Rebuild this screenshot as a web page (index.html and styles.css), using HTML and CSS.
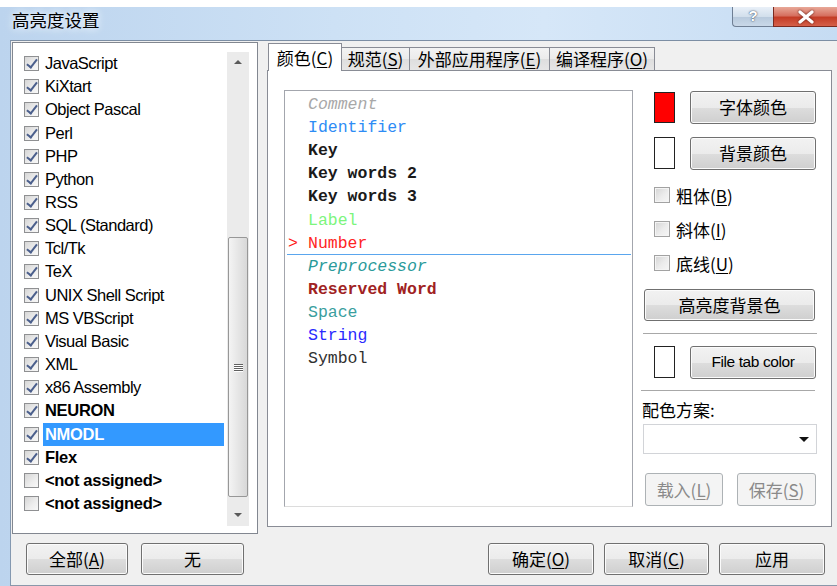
FILE: index.html
```html
<!DOCTYPE html>
<html lang="zh-CN">
<head>
<meta charset="utf-8">
<title>高亮度设置</title>
<link rel="stylesheet" href="styles.css">
</head>
<body>
<div class="window">
  <div class="titlebar">
    <div class="title">高亮度设置</div>
    <div class="caption">
      <div class="cap-help">?</div>
      <div class="cap-close">
        <svg width="18" height="14" viewBox="0 0 18 14"><path d="M3 2 L15 12 M15 2 L3 12" stroke="#fff" stroke-width="3.2" stroke-linecap="round"/></svg>
      </div>
    </div>
  </div>

  <div class="client">
    <div class="main">
      <!-- language list with check boxes -->
      <div class="langlist">
        <div class="items">
          <div class="row"><span class="cb on"></span><span class="lbl">JavaScript</span></div>
          <div class="row"><span class="cb on"></span><span class="lbl">KiXtart</span></div>
          <div class="row"><span class="cb on"></span><span class="lbl">Object Pascal</span></div>
          <div class="row"><span class="cb on"></span><span class="lbl">Perl</span></div>
          <div class="row"><span class="cb on"></span><span class="lbl">PHP</span></div>
          <div class="row"><span class="cb on"></span><span class="lbl">Python</span></div>
          <div class="row"><span class="cb on"></span><span class="lbl">RSS</span></div>
          <div class="row"><span class="cb on"></span><span class="lbl">SQL (Standard)</span></div>
          <div class="row"><span class="cb on"></span><span class="lbl">Tcl/Tk</span></div>
          <div class="row"><span class="cb on"></span><span class="lbl">TeX</span></div>
          <div class="row"><span class="cb on"></span><span class="lbl">UNIX Shell Script</span></div>
          <div class="row"><span class="cb on"></span><span class="lbl">MS VBScript</span></div>
          <div class="row"><span class="cb on"></span><span class="lbl">Visual Basic</span></div>
          <div class="row"><span class="cb on"></span><span class="lbl">XML</span></div>
          <div class="row"><span class="cb on"></span><span class="lbl">x86 Assembly</span></div>
          <div class="row"><span class="cb on"></span><span class="lbl b">NEURON</span></div>
          <div class="row"><span class="cb on"></span><span class="lbl b sel">NMODL</span></div>
          <div class="row"><span class="cb on"></span><span class="lbl b">Flex</span></div>
          <div class="row"><span class="cb"></span><span class="lbl b">&lt;not assigned&gt;</span></div>
          <div class="row"><span class="cb"></span><span class="lbl b">&lt;not assigned&gt;</span></div>
        </div>
        <div class="sb">
          <div class="sb-btn"><span class="tri-up"></span></div>
          <div class="sb-track">
            <div class="thumb"><span class="grip"></span><span class="grip"></span><span class="grip"></span><span class="grip"></span></div>
          </div>
          <div class="sb-btn sb-btn-down"><span class="tri-down"></span></div>
        </div>
      </div>

      <!-- tabbed settings -->
      <div class="tabarea">
        <div class="tabs">
          <div class="tab active t1">颜色(<u>C</u>)</div>
          <div class="tab t2">规范(<u>S</u>)</div>
          <div class="tab t3">外部应用程序(<u>E</u>)</div>
          <div class="tab t4">编译程序(<u>O</u>)</div>
        </div>
        <div class="panel">
          <div class="codelist">
            <div class="crow c-comment"><span class="mark"></span>Comment</div>
            <div class="crow c-ident"><span class="mark"></span>Identifier</div>
            <div class="crow c-key"><span class="mark"></span>Key</div>
            <div class="crow c-key"><span class="mark"></span>Key words 2</div>
            <div class="crow c-key"><span class="mark"></span>Key words 3</div>
            <div class="crow c-label"><span class="mark"></span>Label</div>
            <div class="crow c-number current"><span class="mark">&gt;</span>Number</div>
            <div class="crow c-pre"><span class="mark"></span>Preprocessor</div>
            <div class="crow c-res"><span class="mark"></span>Reserved Word</div>
            <div class="crow c-space"><span class="mark"></span>Space</div>
            <div class="crow c-string"><span class="mark"></span>String</div>
            <div class="crow c-symbol"><span class="mark"></span>Symbol</div>
          </div>

          <div class="side">
            <div class="srow r1">
              <span class="swatch red"></span>
              <div class="btn wide">字体颜色</div>
            </div>
            <div class="srow r2">
              <span class="swatch"></span>
              <div class="btn wide">背景颜色</div>
            </div>
            <div class="chk first"><span class="box"></span><span>粗体(<u>B</u>)</span></div>
            <div class="chk"><span class="box"></span><span>斜体(<u>I</u>)</span></div>
            <div class="chk"><span class="box"></span><span>底线(<u>U</u>)</span></div>
            <div class="btn hbg">高亮度背景色</div>
            <div class="sep"></div>
            <div class="srow r3">
              <span class="swatch"></span>
              <div class="btn wide latin">File tab color</div>
            </div>
            <div class="sep sep2"></div>
            <div class="scheme-label">配色方案:</div>
            <div class="select"><span class="tri-down dark"></span></div>
            <div class="loadsave">
              <div class="btn disabled load">载入(<u>L</u>)</div>
              <div class="btn disabled save">保存(<u>S</u>)</div>
            </div>
          </div>
        </div>
      </div>
    </div>

    <div class="footer">
      <div class="btn f-all">全部(<u>A</u>)</div>
      <div class="btn f-none">无</div>
      <div class="spacer"></div>
      <div class="btn f-ok">确定(<u>O</u>)</div>
      <div class="btn f-cancel">取消(<u>C</u>)</div>
      <div class="btn f-apply">应用</div>
    </div>
  </div>
</div>
</body>
</html>
```

FILE: styles.css
```css
* { box-sizing: border-box; }

html, body {
  margin: 0;
  padding: 0;
}

body {
  width: 837px;
  height: 586px;
  overflow: hidden;
  background: #fff;
  font-family: "Noto Sans CJK SC", "Liberation Sans", sans-serif;
  font-size: 17px;
  color: #000;
}

u { text-decoration: underline; text-underline-offset: 2px; }

/* ---------- window frame ---------- */
.window {
  margin-top: 7px;
  height: 579px;
  display: flex;
  flex-direction: column;
  background: linear-gradient(90deg, #bcd4ee 0%, #cde1f5 40%, #d6e7f8 65%, #c6dcf3 100%);
}

.titlebar {
  height: 33px;
  display: flex;
  align-items: flex-start;
}

.title {
  margin: 3px 0 0 12px;
  font-size: 17.5px;
  line-height: 20px;
  text-shadow: 0 0 6px #eef5fd, 0 0 10px #eef5fd;
}

.caption {
  margin-left: auto;
  display: flex;
  height: 20px;
}

.cap-help {
  width: 41px;
  height: 20px;
  border: 1px solid #6f7f94;
  border-top: none;
  border-right: none;
  border-radius: 0 0 0 4px;
  background: linear-gradient(#e9f0f8 0%, #d2dfec 50%, #b7c9dc 51%, #c9d8e8 100%);
  color: #fff;
  font-family: "Liberation Sans", sans-serif;
  font-weight: bold;
  font-size: 15px;
  line-height: 18px;
  text-align: center;
  text-shadow: 0 0 1px #4a5a70, 0 0 2px #4a5a70;
}

.cap-close {
  width: 64px;
  height: 20px;
  border-bottom: 1px solid #7a2a20;
  border-left: 1px solid #7a2a20;
  background: linear-gradient(#e8a898 0%, #d67060 45%, #c43c26 55%, #d5604a 100%);
  display: flex;
  align-items: center;
  justify-content: center;
}

.cap-close svg { filter: drop-shadow(0 0 1px #5a1a10); }

.client {
  flex: 1;
  margin-left: 10px;
  background: #f0f0f0;
  border-top: 1px solid #7c8ea4;
  border-left: 1px solid #8498b0;
  border-bottom: 1px solid #8a98aa;
  padding: 1px 0 0 1px;
}

.main {
  display: flex;
  height: 492px;
}

/* ---------- language check list ---------- */
.langlist {
  width: 246px;
  height: 492px;
  border: 1px solid #828790;
  background: #fff;
  display: flex;
  padding: 8px 8px 7px 11px;
}

.items {
  flex: 1;
  padding-top: 1px;
}

.row {
  height: 23.16px;
  display: flex;
  align-items: center;
}

.cb {
  position: relative;
  flex: none;
  width: 15px;
  height: 15px;
  border: 1px solid #8f9092;
  background: linear-gradient(135deg, #d6d6d6 0%, #eeeeee 60%, #f8f8f8 100%);
  margin-right: 4px;
}

.cb.on::after {
  content: "";
  position: absolute;
  left: 4px;
  top: 0;
  width: 4px;
  height: 9px;
  border: solid #4b5f8c;
  border-width: 0 2px 2px 0;
  transform: rotate(38deg);
}

.lbl {
  flex: 1;
  margin-right: 3px;
  padding: 0 2px;
  height: 23px;
  line-height: 23px;
  font-family: "Liberation Sans", "Noto Sans CJK SC", sans-serif;
  font-size: 16.5px;
  letter-spacing: -0.5px;
  white-space: nowrap;
}

.lbl.b { font-weight: bold; letter-spacing: -0.3px; }

.lbl.sel {
  background: #3399ff;
  color: #fff;
}

/* scrollbar */
.sb {
  width: 22px;
  margin-top: 1px;
  background: #ebebeb;
  display: flex;
  flex-direction: column;
}

.sb-btn {
  height: 20px;
  display: flex;
  align-items: center;
  justify-content: center;
}

.sb-btn-down { height: 23px; }

.tri-up {
  width: 0;
  height: 0;
  border-left: 4px solid transparent;
  border-right: 4px solid transparent;
  border-bottom: 4px solid #5a5a5a;
}

.tri-down {
  width: 0;
  height: 0;
  border-left: 4px solid transparent;
  border-right: 4px solid transparent;
  border-top: 4px solid #5a5a5a;
}

.tri-down.dark {
  border-left-width: 5px;
  border-right-width: 5px;
  border-top: 5px solid #111;
}

.sb-track {
  flex: 1;
  padding: 165px 1px 0 1px;
}

.thumb {
  height: 260px;
  border: 1px solid #979797;
  border-radius: 2px;
  background: linear-gradient(90deg, #f4f4f4 0%, #e6e6e6 50%, #d8d8d8 100%);
  display: flex;
  flex-direction: column;
  align-items: center;
  justify-content: center;
  gap: 1px;
}

.grip {
  width: 9px;
  height: 1px;
  background: #606060;
  box-shadow: 0 1px 0 #fff;
}

/* ---------- tabs ---------- */
.tabarea {
  margin-left: 9px;
  width: 565px;
  display: flex;
  flex-direction: column;
}

.tabs {
  margin-top: 1px;
  height: 28px;
  margin-bottom: -1px;
  display: flex;
  align-items: flex-end;
  padding-left: 1px;
}

.tab {
  height: 23px;
  margin-bottom: 1px;
  margin-left: -1px;
  border: 1px solid #898c95;
  border-bottom: none;
  background: linear-gradient(#f3f3f3 0%, #ebebeb 50%, #dedede 51%, #e6e6e6 100%);
  padding-top: 1px;
  line-height: 20px;
  text-align: center;
  white-space: nowrap;
}

.tab.active {
  height: 28px;
  margin-bottom: 0;
  margin-left: 0;
  padding-top: 4px;
  background: #fff;
  position: relative;
  z-index: 1;
}

.t1 { width: 74px; }
.t2 { width: 69px; }
.t3 { width: 141px; }
.t4 { width: 106px; }

.panel {
  height: 457px;
  border: 1px solid #898c95;
  background: #fff;
  padding: 19px 0 0 16px;
  display: flex;
  align-items: flex-start;
}

/* ---------- style list ---------- */
.codelist {
  width: 349px;
  height: 417px;
  border: 1px solid #a3a6ad;
  border-bottom-color: #dcdcdc;
  padding-top: 2px;
  font-family: "Liberation Mono", monospace;
  font-size: 16.5px;
}

.crow {
  height: 23.1px;
  margin: 0 1px 0 2px;
  display: flex;
  align-items: center;
  white-space: pre;
}

.mark {
  width: 21px;
  flex: none;
  color: #ff1a1a;
  padding-left: 1px;
}

.current { box-shadow: inset 0 -1px 0 #5aa6ee; }

.c-comment { color: #a8a8a8; font-style: italic; }
.c-ident   { color: #2e8cf5; }
.c-key     { color: #1a1a1a; font-weight: bold; }
.c-label   { color: #7cf57c; }
.c-number  { color: #ff2424; }
.c-pre     { color: #2a9a9a; font-style: italic; }
.c-res     { color: #a02222; font-weight: bold; }
.c-space   { color: #3a9e9e; }
.c-string  { color: #2a2aff; }
.c-symbol  { color: #303030; }

/* ---------- right side controls ---------- */
.side {
  margin-left: 8px;
  width: 176px;
  display: flex;
  flex-direction: column;
}

.srow {
  display: flex;
  align-items: center;
  height: 34px;
}

.r2 { margin-top: 12px; }
.r3 { margin-top: 11px; height: 32px; }

.swatch {
  width: 21px;
  height: 32px;
  margin-left: 13px;
  margin-right: 15px;
  border: 1px solid #222;
  background: #fff;
}

.swatch.red {
  height: 31px;
  background: #ff0000;
}

.btn {
  display: flex;
  align-items: center;
  justify-content: center;
  border: 1px solid #707070;
  border-radius: 3px;
  background: linear-gradient(#f2f2f2 0%, #ebebeb 50%, #dddddd 51%, #cfcfcf 100%);
  box-shadow: inset 0 0 0 1px #fbfbfb;
  line-height: 20px;
  white-space: nowrap;
}

.btn.wide {
  width: 126px;
  height: 33px;
}

.btn.latin {
  font-family: "Liberation Sans", sans-serif;
  font-size: 15.5px;
  letter-spacing: -0.4px;
}

.chk {
  height: 34px;
  display: flex;
  align-items: center;
}

.chk.first { margin-top: 8px; }

.chk .box {
  width: 16px;
  height: 16px;
  margin-left: 13px;
  margin-right: 6px;
  border: 1px solid #a2a2a2;
  background: linear-gradient(135deg, #d4d4d4 0%, #ececec 55%, #f6f6f6 100%);
  box-shadow: inset 0 0 0 1px #f4f4f4;
}

.hbg {
  margin-top: 9px;
  margin-left: 3px;
  width: 171px;
  height: 32px;
}

.sep {
  margin-top: 12px;
  margin-left: 2px;
  width: 174px;
  border-top: 1px solid #a8a8a8;
  border-bottom: 1px solid #fff;
}

.sep2 { margin-left: 0; }

.scheme-label {
  margin-top: 8px;
  margin-left: 1px;
  line-height: 20px;
}

.select {
  margin-top: 4px;
  margin-left: 2px;
  width: 174px;
  height: 30px;
  border: 1px solid #d2d4d8;
  background: #fff;
  display: flex;
  align-items: center;
  justify-content: flex-end;
  padding-right: 7px;
}

.loadsave {
  margin-top: 19px;
  display: flex;
}

.btn.disabled {
  border-color: #adb2b5;
  background: #f4f4f4;
  box-shadow: none;
  color: #8a8a8a;
  height: 33px;
}

.load { margin-left: 4px; width: 78px; }
.save { margin-left: 14px; width: 79px; }

/* ---------- dialog buttons ---------- */
.footer {
  margin-top: 9px;
  display: flex;
  height: 32px;
}

.footer .btn { height: 32px; }

.f-all { margin-left: 14px; width: 102px; }
.f-none { margin-left: 13px; width: 103px; }
.spacer { flex: 1; }
.f-ok { width: 106px; }
.f-cancel { margin-left: 10px; width: 105px; }
.f-apply { margin-left: 10px; width: 106px; margin-right: 12px; }
```
